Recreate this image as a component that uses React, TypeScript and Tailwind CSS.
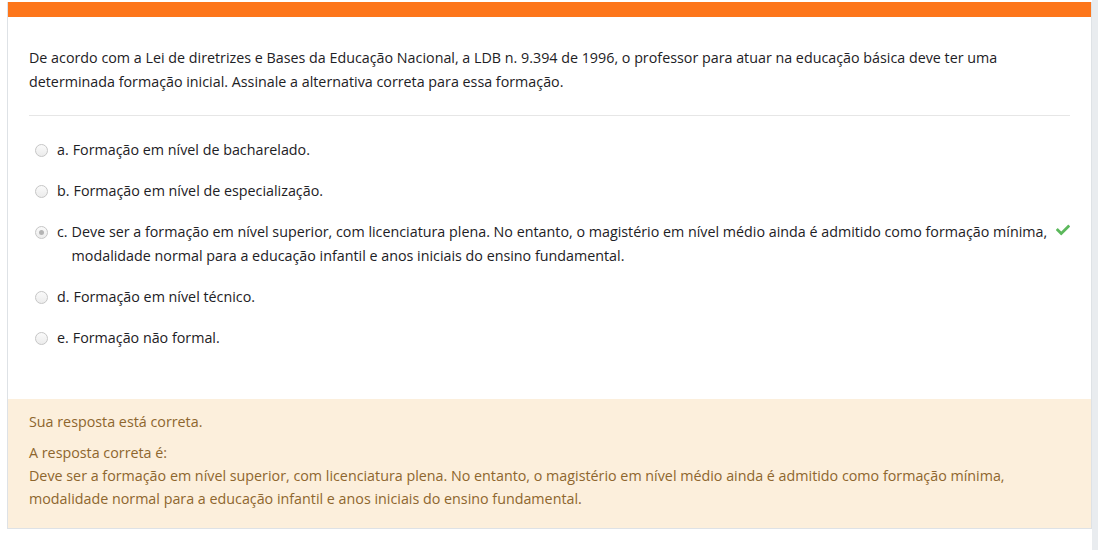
import { FaCheck } from 'react-icons/fa';

const options = [
    { n: 'a.', text: 'Formação em nível de bacharelado.' },
    { n: 'b.', text: 'Formação em nível de especialização.' },
    {
        n: 'c.',
        text: 'Deve ser a formação em nível superior, com licenciatura plena. No entanto, o magistério em nível médio ainda é admitido como formação mínima, modalidade normal para a educação infantil e anos iniciais do ensino fundamental.',
        checked: true,
    },
    { n: 'd.', text: 'Formação em nível técnico.' },
    { n: 'e.', text: 'Formação não formal.' },
];

function Radio({ checked }: { checked?: boolean }) {
    return (
        <span className="mt-[6px] flex h-[13px] w-[13px] shrink-0 items-center justify-center rounded-full border border-[#c6c6c6] bg-gradient-to-b from-[#fafafa] to-[#ececec]">
            {checked && <span className="h-[5px] w-[5px] rounded-full bg-[#b4b4b4]" />}
        </span>
    );
}

export default function App() {
    return (
        <div className="flex h-[550px] w-full bg-white text-[14.3px] font-['Open_Sans',sans-serif]">
            <div className="flex-1 pt-[2px] pl-[7px]">
                <div className="border-x border-b border-[#dee2e6] bg-white">
                    <div className="h-[15px] bg-[#fd761b]" />

                    <div className="px-[21px] pt-[29px] text-[#1d2125]">
                        <p className="leading-[24px]">
                            De acordo com a Lei de diretrizes e Bases da Educação Nacional, a LDB n. 9.394 de 1996, o professor para atuar na educação básica deve ter uma determinada formação inicial. Assinale a alternativa correta para essa formação.
                        </p>
                        <div className="mt-[21px] border-t border-[#e6e6e6]" />

                        <div className="flex flex-col gap-[17px] pt-[22px] pb-[49px] pl-[6px]">
                            {options.map((o) => (
                                <div key={o.n} className="flex items-start leading-[24px]">
                                    <Radio checked={o.checked} />
                                    <div className="ml-[9px] flex min-w-0">
                                        <span className="mr-[4px] whitespace-pre">{o.n}</span>
                                        <div className="min-w-0">{o.text}</div>
                                    </div>
                                    {o.checked && (
                                        <FaCheck className="ml-[4px] mt-[3px] shrink-0 text-[14px] text-[#5cb85c]" />
                                    )}
                                </div>
                            ))}
                        </div>
                    </div>

                    <div className="bg-[#fcefdc] px-[21px] pt-[12px] pb-[18px] text-[#8e662e]">
                        <p className="leading-[22px]">Sua resposta está correta.</p>
                        <div className="mt-[8px] leading-[23px]">
                            <p>A resposta correta é:</p>
                            <p>
                                Deve ser a formação em nível superior, com licenciatura plena. No entanto, o magistério em nível médio ainda é admitido como formação mínima, modalidade normal para a educação infantil e anos iniciais do ensino fundamental.
                            </p>
                        </div>
                    </div>
                </div>
            </div>
            <div className="w-[6px] bg-[#e9ecef]" />
        </div>
    );
}
